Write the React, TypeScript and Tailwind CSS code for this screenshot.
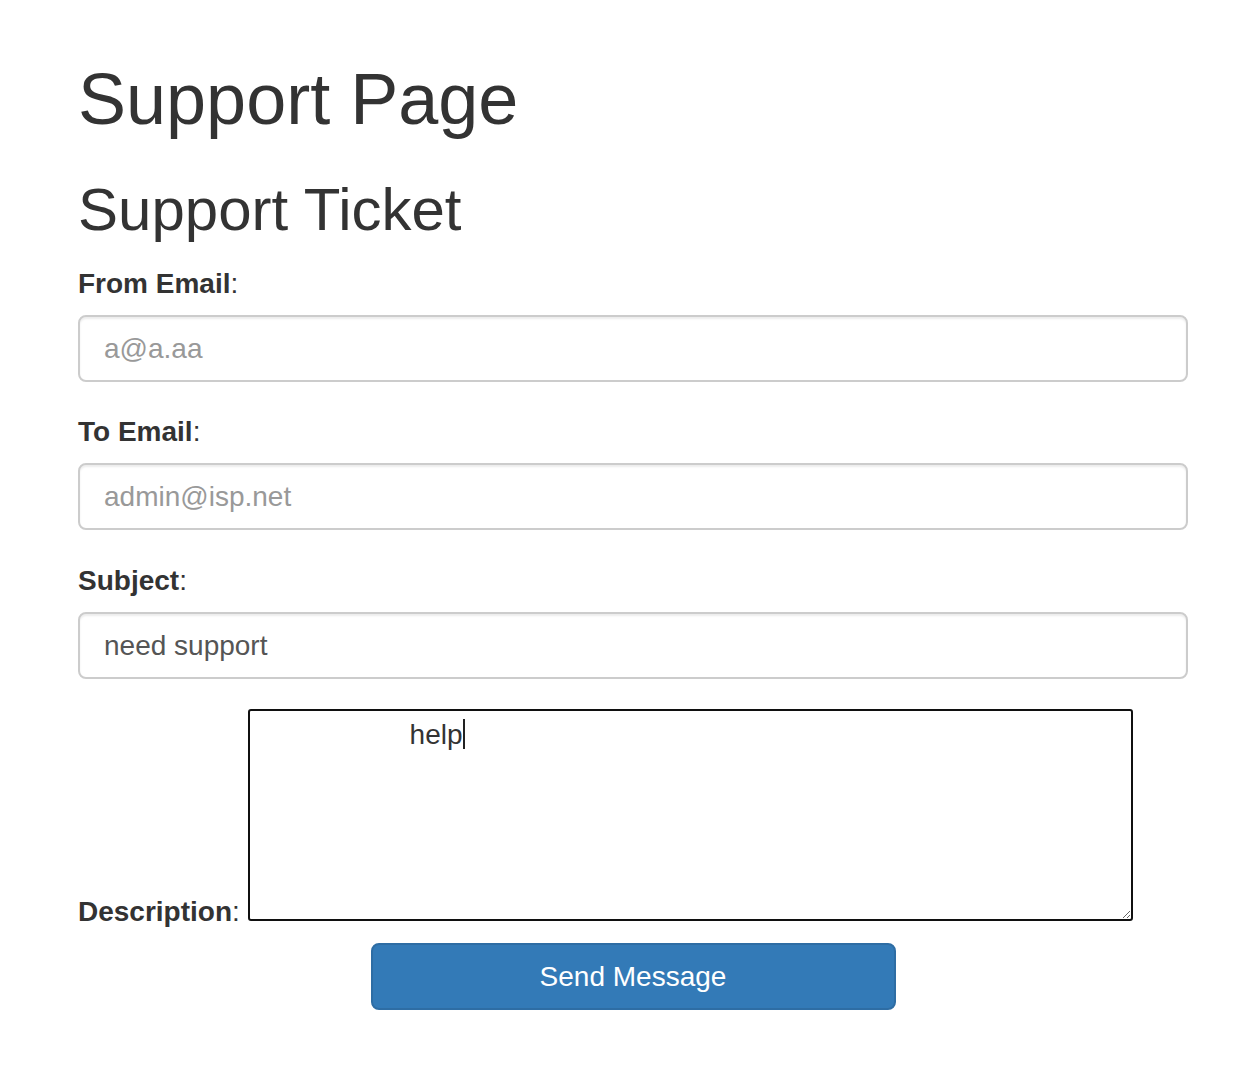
import React from 'react';

const inputCls =
  'mt-[11px] block w-full h-[67px] px-[24px] text-[28px] text-[#555] placeholder:text-[#999] border-2 border-[#ccc] rounded-[8px] shadow-[inset_0_2px_2px_rgba(0,0,0,0.075)] outline-none';

const App: React.FC = () => {
  return (
    <div className="min-h-screen bg-white font-['Liberation_Sans',Arial,sans-serif] text-[#333]">
      <div className="ml-[78px] w-[1110px] pt-[60px] pb-[40px]">
        <h1 className="text-[72px] leading-[79px] font-normal">Support Page</h1>
        <h2 className="mt-[38px] text-[60px] leading-[66px] font-normal">Support Ticket</h2>

        <form onSubmit={e => e.preventDefault()}>
          {/* From */}
          <div className="mt-[21px]">
            <label className="block text-[28px] leading-[40px]">
              <span className="font-bold">From Email</span>:
            </label>
            <input type="email" placeholder="a@a.aa" className={inputCls} />
          </div>

          {/* To */}
          <div className="mt-[30px]">
            <label className="block text-[28px] leading-[40px]">
              <span className="font-bold">To Email</span>:
            </label>
            <input type="email" placeholder="admin@isp.net" className={inputCls} />
          </div>

          {/* Subject */}
          <div className="mt-[31px]">
            <label className="block text-[28px] leading-[40px]">
              <span className="font-bold">Subject</span>:
            </label>
            <input type="text" defaultValue="need support" className={inputCls} />
          </div>

          {/* Description */}
          <div className="relative mt-[30px] text-[28px] leading-[40px]">
            <label>
              <span className="font-bold">Description</span>:
            </label>{' '}
            <textarea
              defaultValue="help"
              className="inline-block w-[885px] h-[212px] pl-[2px] pt-[4px] indent-[158px] text-[28px] leading-[40px] text-[#333] border-2 border-[#101010] rounded-[3px] outline-none resize"
            />
            {/* caret */}
            <span className="absolute left-[385px] top-[10px] w-[2px] h-[30px] bg-[#222]" />
          </div>

          <button
            type="submit"
            className="mt-[11px] mx-auto block w-[525px] h-[67px] bg-[#337ab7] border-2 border-[#2e6da4] rounded-[8px] text-white text-[28px]"
          >
            Send Message
          </button>
        </form>
      </div>
    </div>
  );
};

export default App;
